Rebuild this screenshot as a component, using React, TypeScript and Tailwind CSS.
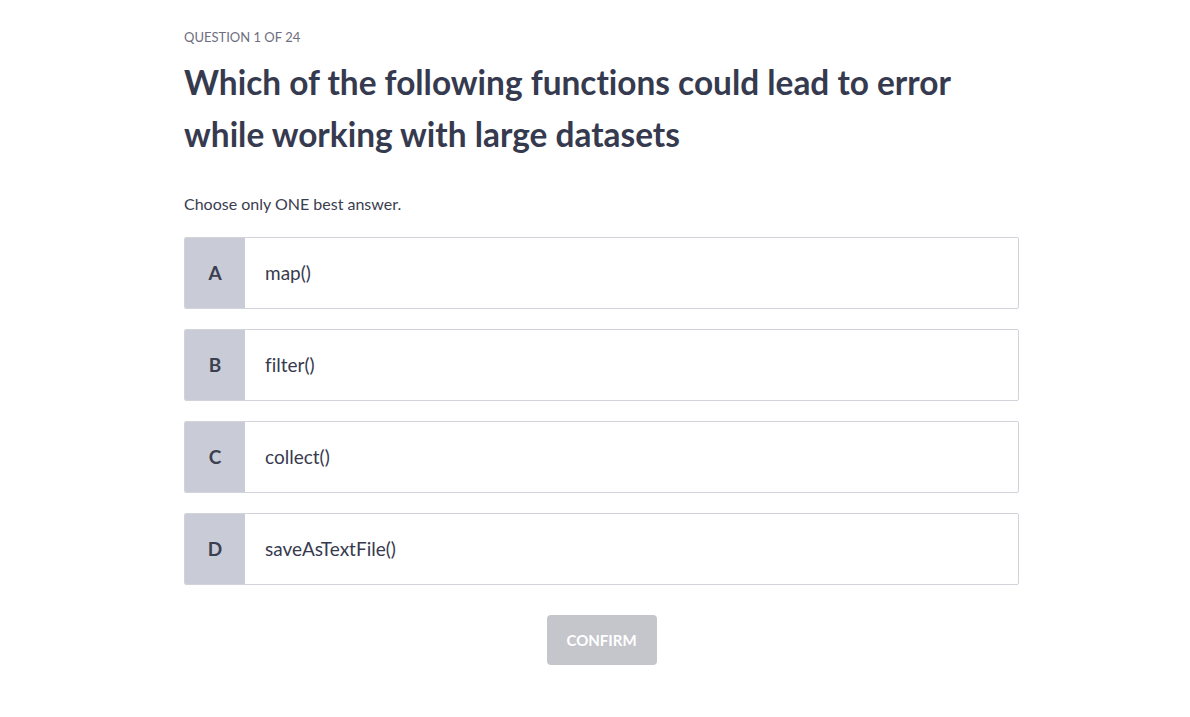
const options = [
  { letter: 'A', text: 'map()' },
  { letter: 'B', text: 'filter()' },
  { letter: 'C', text: 'collect()' },
  { letter: 'D', text: 'saveAsTextFile()' },
];

export default function App() {
  return (
    <div className="min-h-screen bg-white font-['Lato','Noto_Sans',sans-serif] text-[#373a4e] [font-variant-ligatures:none]">
      <div className="ml-[184px] w-[835px] pt-[28px]">
        <div className="text-[13px] leading-[18px] uppercase text-[#6e6e80]">Question 1 of 24</div>
        <h1 className="mt-[10px] text-[33.4px] leading-[52px] font-bold text-[#363a4f]">
          Which of the following functions could lead to error while working with large datasets
        </h1>
        <p className="mt-[32px] text-[16px] leading-[24px] text-[#3a3d4f]">Choose only ONE best answer.</p>
        <div className="mt-[21px] flex flex-col gap-[20px]">
          {options.map((o) => (
            <button
              key={o.letter}
              className="flex h-[72px] w-full items-stretch overflow-hidden rounded-[2px] border border-[#d2d3da] bg-white text-left"
            >
              <span className="flex w-[60px] items-center justify-center bg-[#c9ccd6] text-[19px] font-bold text-[#3b3f52]">
                {o.letter}
              </span>
              <span className="flex items-center pl-[20px] text-[19px] text-[#373a4e]">{o.text}</span>
            </button>
          ))}
        </div>
        <div className="mt-[30px] flex justify-center">
          <button className="h-[50px] w-[110px] rounded-[4px] bg-[#c5c6cc] text-[15px] font-bold uppercase text-white">
            Confirm
          </button>
        </div>
      </div>
    </div>
  );
}
